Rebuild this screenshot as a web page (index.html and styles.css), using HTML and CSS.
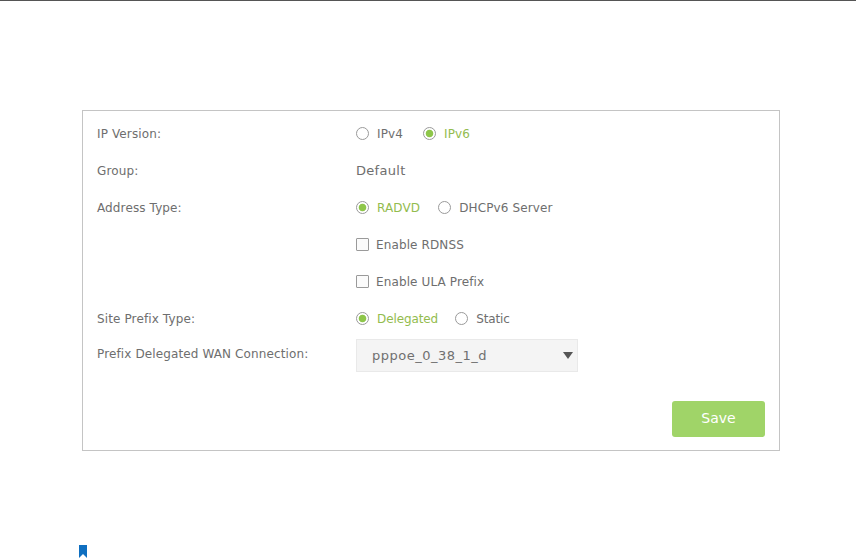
FILE: index.html
```html
<!DOCTYPE html>
<html lang="en">
<head>
<meta charset="utf-8">
<title>IPv6 Settings</title>
<link rel="stylesheet" href="styles.css">
</head>
<body>
<div class="topline"></div>
<form class="panel">
  <div class="row"><div class="label">IP Version:</div><div class="field field-wide">
    <span class="opt"><span class="radio"></span>IPv4</span>
    <span class="opt on"><span class="radio"></span>IPv6</span>
  </div></div>
  <div class="row"><div class="label">Group:</div><div class="field"><span class="value">Default</span></div></div>
  <div class="row"><div class="label">Address Type:</div><div class="field">
    <span class="opt on"><span class="radio"></span>RADVD</span>
    <span class="opt"><span class="radio"></span>DHCPv6 Server</span>
  </div></div>
  <div class="row"><div class="label"></div><div class="field"><span class="opt"><span class="check"></span>Enable RDNSS</span></div></div>
  <div class="row"><div class="label"></div><div class="field"><span class="opt"><span class="check"></span>Enable ULA Prefix</span></div></div>
  <div class="row"><div class="label">Site Prefix Type:</div><div class="field field-narrow">
    <span class="opt on tight"><span class="radio"></span>Delegated</span>
    <span class="opt tight"><span class="radio"></span>Static</span>
  </div></div>
  <div class="row row-select"><div class="label">Prefix Delegated WAN Connection:</div><div class="field">
    <div class="select"><span>pppoe_0_38_1_d</span><span class="caret"></span></div>
  </div></div>
  <div class="actions"><button type="button" class="save">Save</button></div>
</form>
<svg class="mark" width="8" height="13" viewBox="0 0 8 13"><path d="M0 0H8V13L4 9L0 13Z" fill="#0f6fc0"/></svg>
</body>
</html>
```
FILE: styles.css
```css
html, body { margin: 0; padding: 0; }
body {
  width: 856px;
  height: 558px;
  overflow: hidden;
  background: #fff;
  font-family: "DejaVu Sans", sans-serif;
  font-size: 12px;
  letter-spacing: 0.12px;
  color: #6e6e6e;
  display: flex;
  flex-direction: column;
}
.topline { height: 1px; background: #555; flex: none; }
.panel {
  flex: none;
  box-sizing: border-box;
  width: 698px;
  height: 341px;
  margin: 109px 0 0 82px;
  border: 1px solid #c4c4c4;
  padding: 4px 14px 0;
}
.row { display: flex; align-items: center; height: 37px; }
.row-select { height: 36px; }
.row-select .label { padding-bottom: 2px; }
.label { width: 259px; flex: none; }
.field { display: flex; align-items: center; gap: 18px; }
.field-wide { gap: 20px; }
.field-narrow { gap: 17px; }
.opt { display: flex; align-items: center; gap: 8px; }
.opt.on { color: #93bc4e; }
.opt.tight { letter-spacing: -0.1px; }
.value { font-size: 13px; letter-spacing: 0.3px; }
.radio {
  box-sizing: border-box;
  width: 13px; height: 13px;
  border: 1px solid #9a9a9a;
  border-radius: 50%;
  background: #fff;
  flex: none;
}
.on .radio {
  background: radial-gradient(circle, #8ec64a 0 3.4px, #fff 4.2px);
}
.check {
  box-sizing: border-box;
  width: 13px; height: 13px;
  border: 1px solid #9a9a9a;
  border-radius: 1px;
  background: #fbfbfb;
  flex: none;
  margin-right: -1px;
}
.select {
  box-sizing: border-box;
  width: 222px; height: 33px;
  background: #f4f4f4;
  border: 1px solid #e9e9e9;
  padding: 0 4px 0 15px;
  display: flex;
  align-items: center;
  justify-content: space-between;
  font-size: 13px;
  letter-spacing: 0.5px;
  color: #707070;
}
.caret {
  width: 0; height: 0;
  border-left: 5.5px solid transparent;
  border-right: 5.5px solid transparent;
  border-top: 7px solid #555;
}
.actions { display: flex; justify-content: flex-end; margin-top: 28px; }
.save {
  width: 93px; height: 36px;
  background: #a0d468;
  border: 0;
  border-radius: 3px;
  color: #fff;
  font: 14px "DejaVu Sans", sans-serif;
  padding: 0 0 2px;
}
.mark { flex: none; margin: 94px 0 0 79px; display: block; }
```
